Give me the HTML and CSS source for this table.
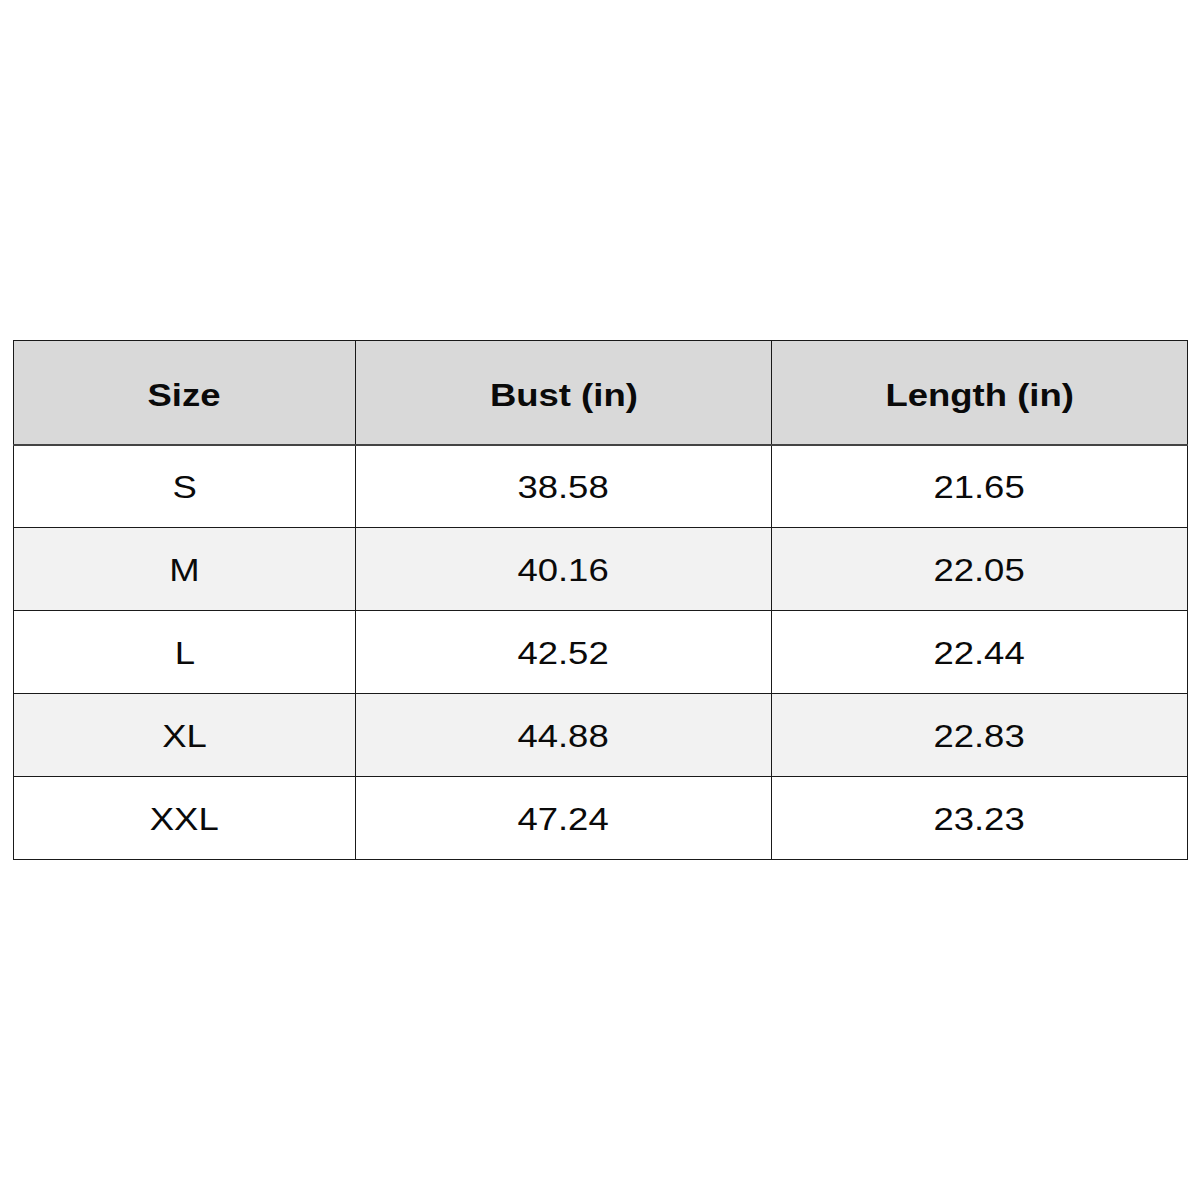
FILE: index.html
```html
<!DOCTYPE html>
<html>
<head>
<meta charset="utf-8">
<link rel="stylesheet" href="styles.css">
</head>
<body>
<div class="page">
<table class="chart">
  <colgroup>
    <col class="c1"><col class="c2"><col class="c3">
  </colgroup>
  <thead>
    <tr><th><span>Size</span></th><th><span>Bust (in)</span></th><th><span>Length (in)</span></th></tr>
  </thead>
  <tbody>
    <tr><td><span>S</span></td><td><span>38.58</span></td><td><span>21.65</span></td></tr>
    <tr class="alt"><td><span>M</span></td><td><span>40.16</span></td><td><span>22.05</span></td></tr>
    <tr><td><span>L</span></td><td><span>42.52</span></td><td><span>22.44</span></td></tr>
    <tr class="alt"><td><span>XL</span></td><td><span>44.88</span></td><td><span>22.83</span></td></tr>
    <tr><td><span>XXL</span></td><td><span>47.24</span></td><td><span>23.23</span></td></tr>
  </tbody>
</table>
</div>
</body>
</html>
```

FILE: styles.css
```css
html, body {
  margin: 0;
  padding: 0;
  background: #ffffff;
}
.page {
  width: 1200px;
  height: 1200px;
  padding: 340px 0 0 13px;
  box-sizing: border-box;
}
.chart {
  border-collapse: collapse;
  table-layout: fixed;
  width: 1174px;
  font-family: "Liberation Sans", Arial, sans-serif;
  color: #0a0a0a;
}
.c1 { width: 342px; }
.c2 { width: 416px; }
.c3 { width: 416px; }
.chart th, .chart td {
  border: 1px solid #1a1a1a;
  text-align: center;
  padding: 0;
  font-size: 32px;
}
.chart th span, .chart td span {
  display: inline-block;
  transform: scaleX(1.14);
}
.chart th {
  height: 104px;
  box-sizing: border-box;
  padding-top: 7px;
  background: #d9d9d9;
  font-weight: bold;
  border-bottom: 2px solid #444444;
}
.chart td {
  height: 83px;
  padding-top: 3px;
  box-sizing: border-box;
  background: #ffffff;
}
.chart tr.alt td {
  background: #f2f2f2;
}
```
